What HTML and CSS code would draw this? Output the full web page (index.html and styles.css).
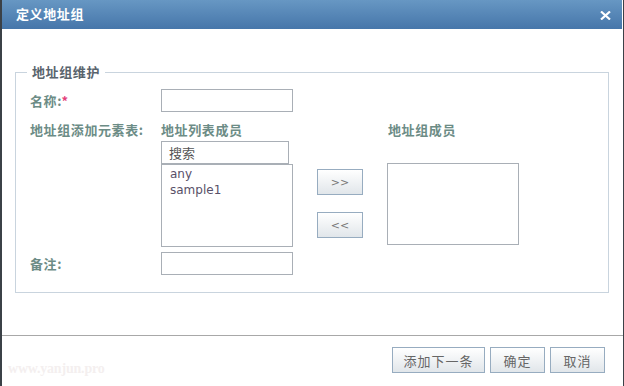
FILE: index.html
```html
<!DOCTYPE html>
<html lang="zh-CN">
<head>
  <meta charset="UTF-8">
  <title>定义地址组</title>
  <meta name="viewport" content="width=device-width, initial-scale=1.0">
  <link rel="stylesheet" href="styles.css">
</head>
<body>
  <div class="dialog">
    <div class="dialog-head">
      <span class="dialog-title">定义地址组</span>
      <svg class="dialog-close" width="11" height="9" viewBox="0 0 11 9">
        <path d="M1 0.5 L10 8.5 M10 0.5 L1 8.5" stroke="#fff" stroke-width="2.2" fill="none"/>
      </svg>
    </div>

    <fieldset class="group">
      <legend>地址组维护</legend>

      <div class="row row-name">
        <label class="field-label">名称:<span class="req">*</span></label>
        <input type="text" class="text-input">
      </div>

      <div class="row row-members">
        <label class="field-label">地址组添加元素表:</label>
        <div class="transfer">
          <div class="transfer-col">
            <div class="col-title">地址列表成员</div>
            <input type="text" class="search-input" value="搜索">
            <div class="list-box">
              <div class="list-item">any</div>
              <div class="list-item">sample1</div>
            </div>
          </div>
          <div class="transfer-actions">
            <button class="btn btn-move">&gt;&gt;</button>
            <button class="btn btn-move">&lt;&lt;</button>
          </div>
          <div class="transfer-col">
            <div class="col-title col-title-right">地址组成员</div>
            <div class="list-box list-box-right"></div>
          </div>
        </div>
      </div>

      <div class="row row-note">
        <label class="field-label">备注:</label>
        <input type="text" class="text-input">
      </div>
    </fieldset>

    <div class="dialog-foot">
      <span class="watermark">www.yanjun.pro</span>
      <button class="btn btn-foot btn-wide">添加下一条</button>
      <button class="btn btn-foot">确定</button>
      <button class="btn btn-foot">取消</button>
    </div>
  </div>
</body>
</html>
```

FILE: styles.css
```css
html, body {
  margin: 0;
  height: 100%;
  background: #fff;
}
body {
  font-family: "Noto Sans CJK SC", "DejaVu Sans", sans-serif;
  font-size: 13px;
}
.dialog {
  box-sizing: border-box;
  height: 100%;
  border-left: 2px solid #3b4147;
  border-right: 1px solid #3b4147;
  display: flex;
  flex-direction: column;
}
.dialog-head {
  height: 29px;
  margin-right: 1px;
  background: linear-gradient(#6797c3, #4676aa);
  display: flex;
  align-items: center;
  padding: 0 11px 0 14px;
}
.dialog-title {
  flex: 1;
  color: #fff;
  font-weight: bold;
  font-size: 13px;
  letter-spacing: 0.6px;
  line-height: 16px;
  margin-top: -1px;
}
.dialog-close {
  display: block;
  margin-top: 1px;
}
.group {
  margin: 35px 14px 0 13px;
  padding: 9px 0 17px 14px;
  border: 1px solid #c9d4de;
  min-width: 0;
}
.group legend {
  margin-left: -3px;
  padding: 0 5px;
  font-weight: bold;
  font-size: 13px;
  letter-spacing: 0.6px;
  line-height: 16px;
  color: #59646d;
}
.row {
  display: flex;
}
.field-label {
  width: 131px;
  flex: none;
  font-weight: bold;
  font-size: 13px;
  letter-spacing: 0.6px;
  line-height: 16px;
  color: #6c8c86;
}
.req {
  color: #e4407c;
}
.row-name,
.row-note {
  align-items: center;
}
.row-members {
  margin-top: 10px;
}
.row-note {
  margin-top: 5px;
}
.text-input,
.search-input {
  box-sizing: border-box;
  width: 132px;
  height: 23px;
  margin: 0;
  border: 1px solid #a9afb6;
  padding: 0 7px;
  font-family: "Noto Sans CJK SC", "DejaVu Sans", sans-serif;
  font-size: 13px;
  color: #555;
  outline: none;
}
.transfer {
  display: flex;
}
.transfer-col {
  display: flex;
  flex-direction: column;
}
.col-title {
  font-weight: bold;
  font-size: 13px;
  letter-spacing: 0.6px;
  line-height: 16px;
  color: #6c8c86;
}
.col-title-right {
  padding-left: 1px;
}
.search-input {
  width: 128px;
  margin-top: 3px;
}
.list-box {
  box-sizing: border-box;
  width: 132px;
  height: 83px;
  border: 1px solid #a9afb6;
  padding: 1px 8px;
}
.list-box-right {
  height: 82px;
  margin-top: 25px;
}
.list-item {
  font-family: "DejaVu Sans", sans-serif;
  font-size: 12px;
  line-height: 16px;
  color: #595068;
}
.transfer-actions {
  display: flex;
  flex-direction: column;
  gap: 17px;
  margin: 47px 24px 0;
}
.btn {
  box-sizing: border-box;
  height: 26px;
  margin: 0;
  border: 1px solid #97acc0;
  background: linear-gradient(#ffffff, #e1e6ea);
  color: #666;
  font-family: "Noto Sans CJK SC", "DejaVu Sans", sans-serif;
  font-size: 13px;
  padding: 0;
  cursor: pointer;
}
.btn-move {
  width: 46px;
  font-family: "DejaVu Sans", sans-serif;
  font-size: 11px;
  color: #777;
  letter-spacing: 0;
}
.dialog-foot {
  margin-top: 42px;
  border-top: 1px solid #a8a8a8;
  display: flex;
  align-items: flex-start;
  gap: 5px;
  padding: 11px 18px 0 6px;
}
.btn-foot {
  width: 55px;
  letter-spacing: 1px;
}
.btn-wide {
  width: 93px;
}
.watermark {
  margin-right: auto;
  margin-top: 14px;
  font-family: "Liberation Serif", serif;
  font-weight: bold;
  font-size: 14px;
  letter-spacing: -0.2px;
  color: #f4efef;
}
```
